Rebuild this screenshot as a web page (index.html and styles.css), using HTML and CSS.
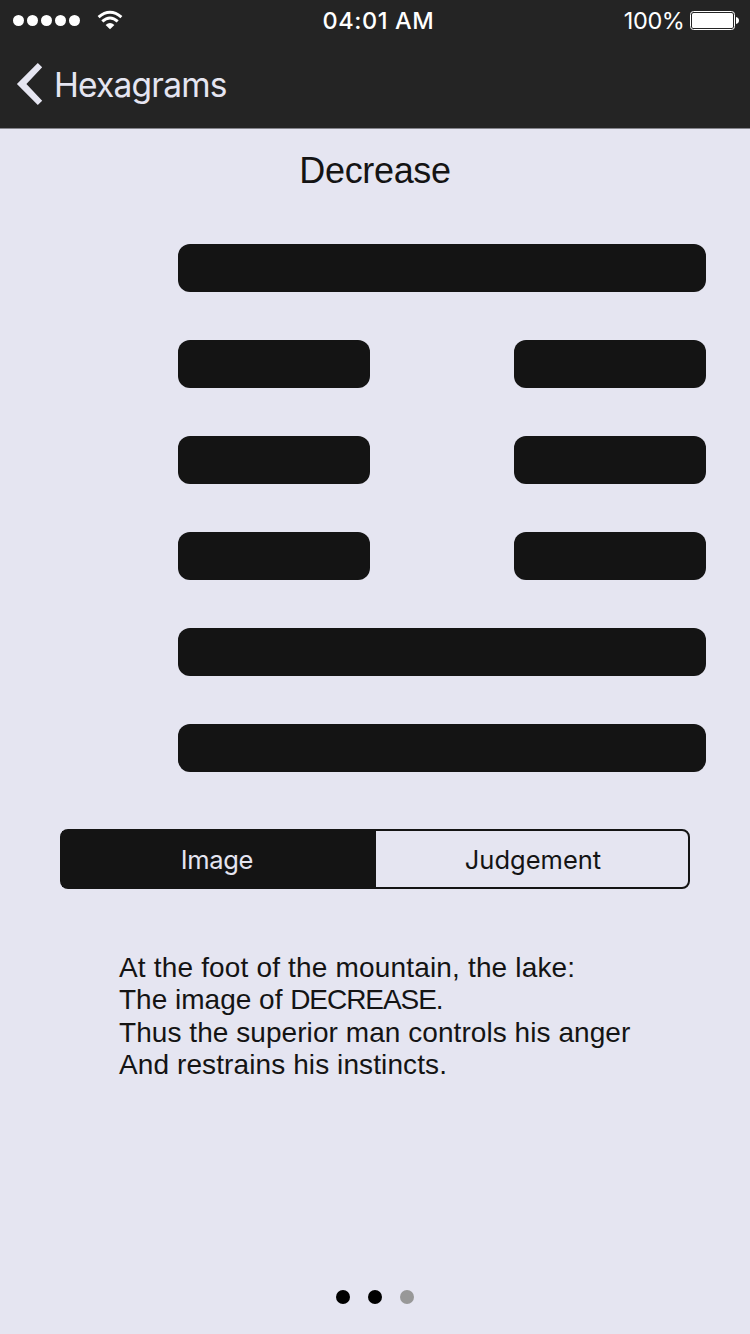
FILE: index.html
```
<!DOCTYPE html>
<html lang="en">
<head>
<meta charset="utf-8">
<title>Decrease</title>
<link rel="stylesheet" href="styles.css">
</head>
<body>
<div class="screen">
  <header class="header">
    <div class="status">
      <div class="status-left">
        <div class="signal"><i></i><i></i><i></i><i></i><i></i></div>
        <svg class="wifi" width="26" height="20" viewBox="0 0 26 20" fill="none" stroke="#fff" stroke-width="3">
          <path d="M1.6 7.2 Q13 -2.6 24.4 7.2"/>
          <path d="M5.3 11.4 Q13 4.6 20.7 11.4"/>
          <path d="M8.6 14.9 Q13 10.9 17.4 14.9 L13 19.2Z" fill="#fff" stroke="none"/>
        </svg>
      </div>
      <div class="time"><span>04:01 AM</span></div>
      <div class="status-right">
        <span class="percent">100%</span>
        <svg class="battery" width="50" height="20" viewBox="0 0 50 20">
          <rect x=".5" y=".5" width="44" height="18" rx="3" fill="none" stroke="#fff" stroke-width="1"/>
          <rect x="2" y="2" width="41" height="15" rx="1.5" fill="#fff"/>
          <path d="M46 6 Q49 6.8 49 9.5 T46 13Z" fill="#fff"/>
        </svg>
      </div>
    </div>
    <nav class="nav">
      <svg class="chevron" width="28" height="44" viewBox="0 0 28 44">
        <path d="M21.8 .9 L26.2 5.3 L10.4 22 L26.2 38.7 L21.8 43.1 L.9 22Z" fill="#e5e5f1"/>
      </svg>
      <span class="back-label">Hexagrams</span>
    </nav>
  </header>
  <main class="content">
    <h1 class="title">Decrease</h1>
    <div class="hexagram">
      <div class="line"><b></b></div>
      <div class="line broken"><b></b><b></b></div>
      <div class="line broken"><b></b><b></b></div>
      <div class="line broken"><b></b><b></b></div>
      <div class="line"><b></b></div>
      <div class="line"><b></b></div>
    </div>
    <div class="segments">
      <div class="segment selected"><span class="image-label">Image</span></div>
      <div class="segment"><span class="judgement-label">Judgement</span></div>
    </div>
    <div class="verse">
      <p class="v1">At the foot of the mountain, the lake:</p>
      <p class="v2">The image of <span class="caps">DECREASE.</span></p>
      <p class="v3">Thus the superior man controls his anger</p>
      <p class="v4">And restrains his instincts.</p>
    </div>
  </main>
  <footer class="pages"><i></i><i></i><i class="off"></i></footer>
</div>
</body>
</html>
```
FILE: styles.css
```
* { box-sizing: border-box; margin: 0; padding: 0; }
body { background: #e5e5f1; }
.screen {
  width: 750px; height: 1334px;
  display: flex; flex-direction: column;
  background: #e5e5f1; color: #141414;
  font-family: "Liberation Sans", Arial, sans-serif;
  white-space: nowrap; overflow: hidden;
}
.header {
  height: 129px; flex: none;
  background: #242424; border-bottom: 1px solid #85858c;
  font-family: Inter, sans-serif;
}
.status { display: grid; grid-template-columns: 250px 1fr 250px; height: 40px; color: #fff; }
.status-left { display: flex; align-items: flex-start; padding-left: 13px; }
.signal { display: flex; gap: 3px; padding-top: 15px; }
.signal i { width: 11px; height: 11px; border-radius: 50%; background: #fff; }
.wifi { margin: 10px 0 0 17px; }
.time { padding: 6px 0 0 72.5px; font-size: 23.5px; line-height: 30px; font-weight: 500; }
.time span { letter-spacing: .6px; }
.status-right { display: flex; justify-content: flex-end; padding-right: 10px; }
.percent { font-size: 23.5px; line-height: 30px; padding-top: 6px; margin-right: 5.5px; letter-spacing: -.4px; }
.battery { margin-top: 11px; }
.nav { display: flex; padding-left: 16px; height: 88px; }
.chevron { margin-top: 22px; }
.back-label { margin: 25px 0 0 10px; font-size: 33.5px; line-height: 40px; letter-spacing: -.8px; color: #e5e5f1; }
.content { flex: 1; display: flex; flex-direction: column; }
.title { margin-top: 21px; height: 42px; line-height: 42px; text-align: center; font-size: 36px; font-weight: 400; letter-spacing: -.35px; }
.hexagram { display: flex; flex-direction: column; gap: 48px; margin: 52px 44px 0 178px; }
.line { display: flex; height: 48px; justify-content: space-between; }
.line b { width: 100%; border-radius: 12px; background: #141414; }
.broken b { width: 192px; }
.segments {
  display: flex; height: 60px; margin: 57px 60px 0;
  border: 2px solid #141414; border-radius: 8px;
  font-family: Inter, sans-serif; font-size: 25.5px; line-height: 57px; text-align: center;
}
.segment { flex: 1; }
.selected { flex: none; width: 314px; padding-right: 4px; background: #141414; color: #e5e5f1; }
.image-label { letter-spacing: -.35px; }
.judgement-label { padding-left: 2px; }
.verse { margin: 63px 0 0 119px; font-size: 28px; line-height: 32.3px; }
.v1 { letter-spacing: .17px; }
.v2 { letter-spacing: 0; }
.caps { letter-spacing: -1.05px; }
.v3 { letter-spacing: .06px; }
.v4 { letter-spacing: .1px; }
.pages { height: 44px; flex: none; display: flex; justify-content: center; gap: 18px; }
.pages i { width: 14px; height: 14px; border-radius: 50%; background: #000; }
.pages .off { background: #989898; }
```
